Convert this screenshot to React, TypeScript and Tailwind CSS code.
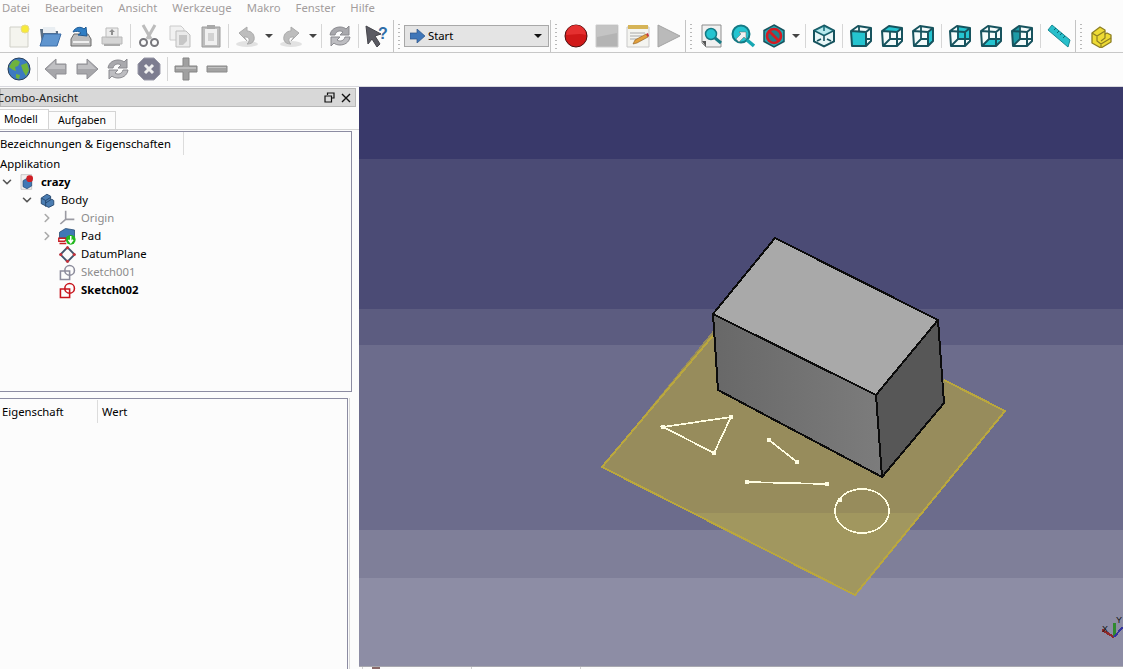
import type { ReactNode } from "react";
import { ChevronDown, ChevronRight } from "lucide-react";

const TEAL = "#25c4d0";
const WIRE = "#17535e";

function Ico({ children, size = 24 }: { children: ReactNode; size?: number }) {
  return (
    <svg viewBox="0 0 24 24" width={size} height={size} fill="none">
      {children}
    </svg>
  );
}

function Btn({ children }: { children: ReactNode }) {
  return <div className="flex h-full w-[31px] shrink-0 items-center justify-center">{children}</div>;
}

function Sep({ wide = 6 }: { wide?: 4 | 5 | 6 }) {
  const w = wide === 4 ? "w-[4px]" : wide === 5 ? "w-[5px]" : "w-[6px]";
  return (
    <div className={`flex h-full shrink-0 items-center justify-center ${w}`}>
      <div className="h-[24px] w-px bg-[#d6d6d6]" />
    </div>
  );
}

function Arrow() {
  return (
    <div className="flex h-full w-[13px] shrink-0 items-center justify-center">
      <svg width="8" height="4" viewBox="0 0 8 4">
        <path d="M0 0h8L4 4z" fill="#444" />
      </svg>
    </div>
  );
}

// toolbar boundary: full height line, then the dotted handle
function Break({ wide = 12 }: { wide?: 11 | 12 }) {
  return (
    <div className={`flex h-full shrink-0 ${wide === 11 ? "w-[11px]" : "w-[12px]"}`}>
      <div className="ml-px h-full w-px bg-[#c4c4c4]" />
      <div className="ml-[4px] mt-[4px] h-[25px] w-[2px] bg-[repeating-linear-gradient(to_bottom,#b8b8b8_0,#b8b8b8_1px,transparent_1px,transparent_4px)]" />
    </div>
  );
}

function Cube({ face }: { face?: "front" | "top" | "right" | "rear" | "bottom" | "left" }) {
  return (
    <Ico>
      <path d="M2 7 9 2l13 2v13l-5 5H3z" fill="#f4fbfb" />
      {face === "rear" && <path d="M9 3h13v12H9z" fill={TEAL} />}
      {face === "bottom" && <path d="M3 22l7-7h12l-5 7z" fill={TEAL} />}
      {face === "left" && <path d="M2 7l7-5 1 13-7 7z" fill="#1f9aa6" />}
      <path d="M10 15V3M10 15H22M10 15l-7 7" stroke={WIRE} strokeWidth="1.800" />
      {face === "front" && <path d="M2 7l15 1v14H3z" fill={TEAL} />}
      {face === "top" && <path d="M2 7l7-5 13 2-5 4z" fill={TEAL} />}
      {face === "right" && <path d="M17 8l5-4v13l-5 5z" fill={TEAL} />}
      <path d="M2 7 9 2l13 2v13l-5 5H3zM2 7l15 1 5-4M17 8v14" stroke={WIRE} strokeWidth="2" strokeLinejoin="round" />
    </Ico>
  );
}

const IsoCube = () => (
  <Ico>
    <path d="M12 1.500 22 6.500v11l-10 5-10-5v-11z" fill="#e8f6f7" stroke={WIRE} strokeWidth="2" />
    <path d="M2 6.500l10 5 10-5M12 1.500V7M12 11.500V17M5 17l4-2M19 17l-4-2" stroke={WIRE} strokeWidth="1.600" />
    <path d="M12 1.500 22 6.500 12 11.500 2 6.500z" fill={TEAL} fillOpacity=".25" />
  </Ico>
);

const Refresh = () => (
  <Ico>
    <path d="M2 11C3 5 8 3 12 3c3 0 5 1 6 2l3-3v9h-9l3-3c-3-2-7-1-8 3z" fill="#a9a9ad" stroke="#8a8a8f" />
    <path d="M22 13c-1 6-6 8-10 8-3 0-5-1-6-2l-3 3v-9h9l-3 3c3 2 7 1 8-3z" fill="#bdbdc1" stroke="#8a8a8f" />
  </Ico>
);

const GreyArrow = ({ flip }: { flip?: boolean }) => (
  <Ico>
    <path
      d={flip ? "M23 12 12 2v5H2v10h10v5z" : "M1 12 12 2v5h10v10H12v5z"}
      fill="#a6a6aa"
      stroke="#8f8f94"
    />
    <path d={flip ? "M3 8h10V4l8 8H3z" : "M3 12l8-8v4h10v4z"} fill="#c0c0c3" />
  </Ico>
);

const Curl = ({ flip }: { flip?: boolean }) => (
  <Ico>
    <g transform={flip ? "translate(24 0) scale(-1 1)" : undefined}>
      <ellipse cx="12" cy="20" rx="11" ry="3" fill="#e2e2e2" />
      <path d="M4 9l8-6v4c5 0 8 4 7 9-1 3-4 4-7 4 3-2 3-7-1-7H9l3 4z" fill="#bdbdbd" stroke="#aaa" />
    </g>
  </Ico>
);

function MainToolbar() {
  return (
    <div className="flex h-[33px] items-center border-b border-[#c8c8c8] pl-[3px]">
      <Btn>
        <Ico>
          <path d="M3 3h13l5 5v15H3z" fill="#f4f4ee" stroke="#d0d0c8" />
          <circle cx="18" cy="5" r="4" fill="#f7ea3a" stroke="#e6d98a" />
        </Ico>
      </Btn>
      <Btn>
        <Ico>
          <path d="M2 5h7l2 2h9v14H4z" fill="#5c6f84" />
          <path d="M5 3h12l1 6H5z" fill="#e9eef2" />
          <path d="M6 10h17l-4 12H2z" fill="#5f95cf" stroke="#3c6ea8" />
        </Ico>
      </Btn>
      <Btn>
        <Ico>
          <path d="M2 15l3-5h14l3 5v7H2z" fill="#bcbcbc" stroke="#6b6b6b" />
          <path d="M4 18h16" stroke="#efefef" strokeWidth="2" />
          <path d="M4 8c2-5 8-6 11-3l2-2 1 9-9-1 3-2c-2-2-5-2-8-1z" fill="#2f7ec4" stroke="#1f5a94" />
        </Ico>
      </Btn>
      <Btn>
        <Ico>
          <path d="M2 13h20v7H2z" fill="#d5d5d5" stroke="#b8b8b8" />
          <path d="M6 4h12v9H6z" fill="#ececec" stroke="#bbb" />
          <path d="M12 5l3 3h-2v3h-2V8H9z" fill="#8f8f8f" />
          <path d="M4 21h16" stroke="#a9a9a9" strokeWidth="2" />
        </Ico>
      </Btn>
      <Sep />
      <Btn>
        <Ico>
          <path d="M6 1l8 14M18 1l-8 14" stroke="#bcbcbc" strokeWidth="3" />
          <circle cx="6.500" cy="18.500" r="3.500" stroke="#77777c" strokeWidth="2" />
          <circle cx="17.500" cy="18.500" r="3.500" stroke="#77777c" strokeWidth="2" />
        </Ico>
      </Btn>
      <Btn>
        <Ico>
          <path d="M2 2h11l3 3v11H2z" fill="#f1f1f1" stroke="#ccc" />
          <path d="M8 7h10l4 4v12H8z" fill="#eaeaea" stroke="#bdbdbd" />
          <path d="M11 11h8v6l-4 4h-4z" fill="#c6c6c6" />
        </Ico>
      </Btn>
      <Btn>
        <Ico>
          <path d="M3 3h18v20H3z" fill="#bdbdbd" stroke="#9c9c9c" />
          <path d="M6 5h12v16H6z" fill="#f0f0f0" />
          <path d="M8 1h8v4H8z" fill="#a9a9a9" />
          <path d="M9 9h6v8H9z" fill="#d2d2d2" />
        </Ico>
      </Btn>
      <Sep wide={5} />
      <Btn><Curl /></Btn>
      <Arrow />
      <Btn><Curl flip /></Btn>
      <Arrow />
      <Sep wide={5} />
      <Btn><Refresh /></Btn>
      <Sep />
      <Btn>
        <Ico>
          <path d="M1 2l15 8-6 2 5 8-3 3-5-8-4 5z" fill="#5a5a62" stroke="#45454b" />
          <text x="13" y="15" fontSize="16" fontWeight="700" fill="#2f6ea8" fontFamily="Liberation Sans, sans-serif">?</text>
        </Ico>
      </Btn>
      <Break />
      <div className="flex h-[22px] w-[145px] shrink-0 items-center border border-[#a8a8a8] bg-[#e4e4e4] pl-[5px] pr-[6px] text-black">
        <svg width="15" height="14" viewBox="0 0 15 14" className="mr-[3px]">
          <path d="M0 4h7V0l8 7-8 7v-4H0z" fill="#3f76b8" stroke="#2d5486" strokeWidth=".7" />
        </svg>
        <span className="flex-1">Start</span>
        <svg width="8" height="4" viewBox="0 0 8 4">
          <path d="M0 0h8L4 4z" fill="#111" />
        </svg>
      </div>
      <Break wide={11} />
      <Btn>
        <Ico>
          <circle cx="12" cy="12" r="11" fill="#d01818" stroke="#4a1010" strokeWidth="1" />
          <path d="M2 11a10 10 0 0 1 20 0c-6-2-14 0-20 0z" fill="#e53030" />
        </Ico>
      </Btn>
      <Btn>
        <Ico>
          <path d="M1 1h22v22H1z" fill="#b4b4b4" stroke="#cfcfcf" />
          <path d="M2 2h20v7L2 13z" fill="#c4c4c4" />
        </Ico>
      </Btn>
      <Btn>
        <Ico>
          <path d="M1 3h22v20H1z" fill="#f4f4f0" stroke="#c8c8c8" />
          <path d="M2 1h20v4H2z" fill="#d6b457" />
          <path d="M4 9h15M4 12h12M4 15h8" stroke="#a8a8a8" />
          <path d="M7 20l2-4 11-6 2 3-11 6z" fill="#e2a03c" stroke="#8a5a20" strokeWidth=".6" />
          <path d="M20 10l2-1 1 3-1 1z" fill="#c8323c" />
        </Ico>
      </Btn>
      <Btn>
        <Ico>
          <path d="M1 1l22 11L1 23z" fill="#bababa" stroke="#a4a4a4" />
        </Ico>
      </Btn>
      <Break />
      <Btn>
        <Ico>
          <path d="M2 1h19v22H6l-4-4z" fill="#f0f0f0" stroke="#8d8d8d" />
          <path d="M2 17l4 6v-6z" fill="#555" />
          <circle cx="11" cy="10" r="5.500" fill={TEAL} stroke="#147a85" strokeWidth="1.500" />
          <path d="M15 14l6 5" stroke="#147a85" strokeWidth="3" />
        </Ico>
      </Btn>
      <Btn>
        <Ico>
          <circle cx="10" cy="10" r="8.500" fill={TEAL} stroke="#147a85" strokeWidth="2" />
          <path d="M16 16l7 6" stroke="#17a7b3" strokeWidth="3.500" />
          <path d="M5 15l5-5-2-2h7v7l-2-2-5 5z" fill="#f2f2f2" stroke="#666" strokeWidth=".5" />
        </Ico>
      </Btn>
      <Btn>
        <Ico>
          <path d="M12 1 22 6.500v11L12 23 2 17.500v-11z" fill="#22a8b4" stroke={WIRE} strokeWidth="1.500" />
          <circle cx="12" cy="12" r="7" fill="#1f7f8b" stroke="#d31b22" strokeWidth="2.600" />
          <path d="M7 7l10 10" stroke="#d31b22" strokeWidth="2.600" />
        </Ico>
      </Btn>
      <Arrow />
      <Sep />
      <Btn><IsoCube /></Btn>
      <Sep />
      <Btn><Cube face="front" /></Btn>
      <Btn><Cube face="top" /></Btn>
      <Btn><Cube face="right" /></Btn>
      <Sep />
      <Btn><Cube face="rear" /></Btn>
      <Btn><Cube face="bottom" /></Btn>
      <Btn><Cube face="left" /></Btn>
      <Sep />
      <Btn>
        <Ico>
          <path d="M5 1l18 15-2 7L1 6z" fill="#27bfcb" stroke="#1a8a95" />
          <path d="M7 6l2-2M10 9l2-2M13 11l2-2M16 14l2-2" stroke="#0f6670" />
        </Ico>
      </Btn>
      <Break wide={11} />
      <Btn>
        <Ico>
          <path d="M3 9l8-6 5 3v4l2-1 4 2v7l-10 6-9-5z" fill="#eedb35" stroke="#8d7f22" strokeWidth="1.300" strokeLinejoin="round" />
          <path d="M3 9l5 3 8-5M8 12v5l4 3 10-6M12 20v3M16 10v4l-4 3" stroke="#8d7f22" strokeWidth="1.200" />
        </Ico>
      </Btn>
    </div>
  );
}

function WebToolbar() {
  return (
    <div className="flex h-[34px] items-center border-b border-[#d8d8de] pb-[2px] pl-[3px]">
      <Btn>
        <Ico>
          <circle cx="12" cy="12" r="11" fill="#3d7ac0" stroke="#2a3f58" />
          <path d="M5 5c3-3 6-2 8 0l-2 4-3 1 1 4-3-1-4-3zM14 8l6-2 2 7-3 6-3-5z" fill="#6fb33c" />
          <path d="M9 17l4 1-1 4-3-1z" fill="#6fb33c" />
        </Ico>
      </Btn>
      <Sep />
      <Btn><GreyArrow /></Btn>
      <Btn><GreyArrow flip /></Btn>
      <Btn><Refresh /></Btn>
      <Btn>
        <Ico>
          <path d="M7 1h10l6 6v10l-6 6H7l-6-6V7z" fill="#7d7d90" stroke="#9a9aa8" />
          <path d="M8 8l8 8M16 8l-8 8" stroke="#f0f0f0" strokeWidth="3" />
        </Ico>
      </Btn>
      <Sep />
      <Btn>
        <Ico>
          <path d="M9 1h6v8h8v6h-8v8H9v-8H1V9h8z" fill="#a0a0a0" stroke="#858585" />
          <path d="M2 10h20v2H2z" fill="#bdbdbd" />
        </Ico>
      </Btn>
      <Btn>
        <Ico>
          <path d="M2 9h20v6H2z" fill="#a3a3a3" stroke="#8a8a8a" />
          <path d="M3 10h18v1H3z" fill="#c2c2c2" />
        </Ico>
      </Btn>
    </div>
  );
}

const DocIcon = () => (
  <Ico size={16}>
    <path d="M3 1h16v22H3z" fill="#f1f1f1" stroke="#b4b4b4" />
    <path d="M6 10l7-4 6 3v9l-7 4-6-3z" fill="#3f78b5" stroke="#23476e" />
    <circle cx="16" cy="7" r="5" fill="#cf1f25" />
  </Ico>
);
const BodyIcon = () => (
  <Ico size={15}>
    <path d="M2 8l9-6 6 3v6l2-1 3 2v7l-8 4-12-6z" fill="#4b7db2" stroke="#24456b" strokeWidth="1.400" strokeLinejoin="round" />
    <path d="M2 8l7 4v10M9 12l8-5M9 16l8-5" stroke="#24456b" strokeWidth="1.400" />
  </Ico>
);
const OriginIcon = () => (
  <Ico size={16}>
    <path d="M10 1v13M10 14h13M10 14l-8 7" stroke="#9a9aa2" strokeWidth="2.400" />
  </Ico>
);
const PadIcon = () => (
  <Ico size={18}>
    <path d="M2 7l8-5 12 2v10l-20 1z" fill="#3f78b5" stroke="#23476e" />
    <path d="M1 15h11l-3 4H1zM2 22h9" stroke="#c81e24" strokeWidth="1.800" />
    <circle cx="17" cy="17" r="6.500" fill="#22b81f" />
    <path d="M17 12v9M14 17l3 4 3-4" stroke="#fff" strokeWidth="2" />
  </Ico>
);
const DatumIcon = () => (
  <Ico size={17}>
    <path d="M12 2 22 12 12 22 2 12z" stroke="#43536b" strokeWidth="2.600" fill="#fafafa" />
    <circle cx="12" cy="2.500" r="2.200" fill="#c8323c" />
    <circle cx="2.500" cy="12" r="2.200" fill="#c8323c" />
    <circle cx="21.500" cy="12" r="2.200" fill="#c8323c" />
    <circle cx="12" cy="21.500" r="2.200" fill="#c8323c" />
  </Ico>
);
const SketchIcon = ({ color }: { color: string }) => (
  <Ico size={17}>
    <path d="M2 10h13v12H2z" stroke={color} strokeWidth="2.200" />
    <circle cx="15" cy="9" r="6.800" stroke={color} strokeWidth="2.200" />
  </Ico>
);

function TreeRow({
  pad,
  open,
  closed,
  icon,
  className,
  children,
}: {
  pad: string;
  open?: boolean;
  closed?: boolean;
  icon: ReactNode;
  className: string;
  children: ReactNode;
}) {
  return (
    <div className={`flex h-[18px] items-center ${pad}`}>
      <div className="flex w-[14px] shrink-0 justify-center">
        {open && <ChevronDown size={14} strokeWidth={2.800} className="text-[#555]" />}
        {closed && <ChevronRight size={14} strokeWidth={2.800} className="text-[#aaa]" />}
      </div>
      <div className="ml-[3px] flex w-[20px] shrink-0 justify-center">{icon}</div>
      <span className={`ml-[4px] ${className}`}>{children}</span>
    </div>
  );
}

function ComboPanel() {
  return (
    <div className="flex w-[359px] shrink-0 flex-col overflow-hidden leading-none">
      <div className="mt-px flex h-[19px] w-[356px] items-center justify-between border border-[#b8b8b8] bg-[#d8d8d8] pr-[4px] text-[#222]">
        <span className="-ml-[4px]">Combo-Ansicht</span>
        <div className="flex items-center gap-[6px]">
          <svg width="11" height="11" viewBox="0 0 11 11" fill="none" stroke="#111" strokeWidth="1.200">
            <path d="M3.500 3V1h6.500v5H8M1 4h6.500v6H1z" />
          </svg>
          <svg width="10" height="10" viewBox="0 0 10 10" stroke="#111" strokeWidth="1.400">
            <path d="M1 1l8 8M9 1l-8 8" />
          </svg>
        </div>
      </div>
      <div className="mt-[3px] flex h-[20px] items-end border-b border-[#d4d4d4] text-[10.5px]">
        <div className="flex h-[20px] w-[49px] items-center border-r border-t border-[#d4d4d4] bg-white pl-[4px] text-black">
          Modell
        </div>
        <div className="flex h-[18px] w-[67px] items-center justify-center border-r border-t border-[#d4d4d4] text-black">
          Aufgaben
        </div>
      </div>
      <div className="mt-px flex h-[261px] w-[352px] flex-col border-b border-r border-t border-[#8c8ca2] bg-[#fcfcfc] text-black">
        <div className="flex h-[23px] w-[184px] shrink-0 items-center border-r border-[#dcdcdc]">
          Bezeichnungen &amp; Eigenschaften
        </div>
        <div className="flex h-[18px] shrink-0 items-center">Applikation</div>
        <TreeRow pad="pl-0" open icon={<DocIcon />} className="font-bold">crazy</TreeRow>
        <TreeRow pad="pl-[20px]" open icon={<BodyIcon />} className="">Body</TreeRow>
        <TreeRow pad="pl-[40px]" closed icon={<OriginIcon />} className="text-[#8c8c8c]">Origin</TreeRow>
        <TreeRow pad="pl-[40px]" closed icon={<PadIcon />} className="">Pad</TreeRow>
        <TreeRow pad="pl-[40px]" icon={<DatumIcon />} className="">DatumPlane</TreeRow>
        <TreeRow pad="pl-[40px]" icon={<SketchIcon color="#8c8c9c" />} className="text-[#8c8c8c]">Sketch001</TreeRow>
        <TreeRow pad="pl-[40px]" icon={<SketchIcon color="#c8141c" />} className="font-bold">Sketch002</TreeRow>
      </div>
      <div className="mt-[6px] w-[350px] flex-1 border-r border-[#d8d8d8]">
        <div className="h-full w-[348px] border-r border-t border-[#8c8ca2] bg-[#fcfcfc] text-black">
          <div className="flex h-[25px] items-center">
            <div className="w-[98px] border-r border-[#dcdcdc] py-[6px] pl-[2px]">Eigenschaft</div>
            <div className="pl-[4px]">Wert</div>
          </div>
        </div>
      </div>
    </div>
  );
}

function Scene() {
  return (
    <svg viewBox="359 87 764 579" className="block h-[579px] w-full" shapeRendering="crispEdges">
      <defs>
        <linearGradient id="leftFace" x1="0" x2="1" y1="0" y2="0">
          <stop offset="0" stopColor="#686868" />
          <stop offset="1" stopColor="#7c7c7c" />
        </linearGradient>
        <clipPath id="lowerPlane">
          <rect x="359" y="513" width="764" height="153" />
        </clipPath>
      </defs>
      <rect x="359" y="87" width="764" height="72" fill="#39396a" />
      <rect x="359" y="159" width="764" height="150" fill="#4b4b75" />
      <rect x="359" y="309" width="764" height="36" fill="#5c5c80" />
      <rect x="359" y="345" width="764" height="185" fill="#6c6c8c" />
      <rect x="359" y="530" width="764" height="48" fill="#7f7f99" />
      <rect x="359" y="578" width="764" height="88" fill="#8d8da5" />

      <path d="M602 467 752 283 1005 411 855 595z" fill="#978c5c" />
      <path d="M602 467 752 283 1005 411 855 595z" fill="#a1975f" clipPath="url(#lowerPlane)" />
      <path d="M716 332 602 467 855 595 1005 411 944 380" fill="none" stroke="#baa73e" strokeWidth="2" />

      <path d="M713 314 876 395 882 477 718 390z" fill="url(#leftFace)" />
      <path d="M876 395 938 320 944 403 882 477z" fill="#575757" />
      <path d="M775 238 938 320 876 395 713 314z" fill="#a9a9a9" />
      <path
        d="M775 238 938 320 944 403 882 477 718 390 713 314zM713 314 876 395 938 320M876 395 882 477"
        fill="none"
        stroke="#0c0c0c"
        strokeWidth="2"
        strokeLinejoin="round"
      />

      <g stroke="#fffde2" strokeWidth="1.700" fill="none">
        <path d="M663 427 731 417 714 453z" />
        <path d="M769 440 797 462" />
        <path d="M747 482 827 484" />
        <ellipse cx="862" cy="511" rx="27" ry="22" />
      </g>
      <g fill="#fffde2">
        <rect x="661" y="425" width="4" height="4" />
        <rect x="729" y="415" width="4" height="4" />
        <rect x="712" y="451" width="4" height="4" />
        <rect x="767" y="438" width="4" height="4" />
        <rect x="795" y="460" width="4" height="4" />
        <rect x="745" y="480" width="4" height="4" />
        <rect x="825" y="482" width="4" height="4" />
        <rect x="838" y="498" width="4" height="4" />
      </g>

      <path d="M1114 637 1102 630" stroke="#8e2a2a" strokeWidth="2.500" />
      <path d="M1114 637 1114 623" stroke="#2f8a2f" strokeWidth="3" />
      <path d="M1114 637 1123 627" stroke="#34349e" strokeWidth="2" />
      <text x="1105" y="632" fontSize="9" textAnchor="middle" fill="#111" fontFamily="Liberation Sans, sans-serif">X</text>
      <text x="1119" y="623" fontSize="9" textAnchor="middle" fill="#111" fontFamily="Liberation Sans, sans-serif">Y</text>
    </svg>
  );
}

export default function App() {
  return (
    <div className="flex h-[669px] w-[1123px] flex-col overflow-hidden bg-[#fcfcfc] font-['Noto_Sans',sans-serif] text-[11.3px]">
      <div className="flex h-[20px] items-center gap-[15px] pb-[3px] pl-[2px] text-[#a39d9d]">
        <span>Datei</span>
        <span>Bearbeiten</span>
        <span>Ansicht</span>
        <span>Werkzeuge</span>
        <span>Makro</span>
        <span>Fenster</span>
        <span>Hilfe</span>
      </div>
      <MainToolbar />
      <WebToolbar />
      <div className="flex min-h-0 flex-1">
        <ComboPanel />
        <div className="flex min-w-0 flex-1 flex-col">
          <Scene />
          <div className="flex flex-1 border-t border-[#a8a8b0] pl-[3px]">
            <div className="w-[110px] border-l border-r border-[#d0d0d0] pl-[9px]">
              <div className="h-[2px] w-[8px] bg-[#8a6a6a]" />
            </div>
            <div className="w-[108px] bg-white" />
            <div className="flex-1 border-l border-[#d0d0d0]" />
          </div>
        </div>
      </div>
    </div>
  );
}
